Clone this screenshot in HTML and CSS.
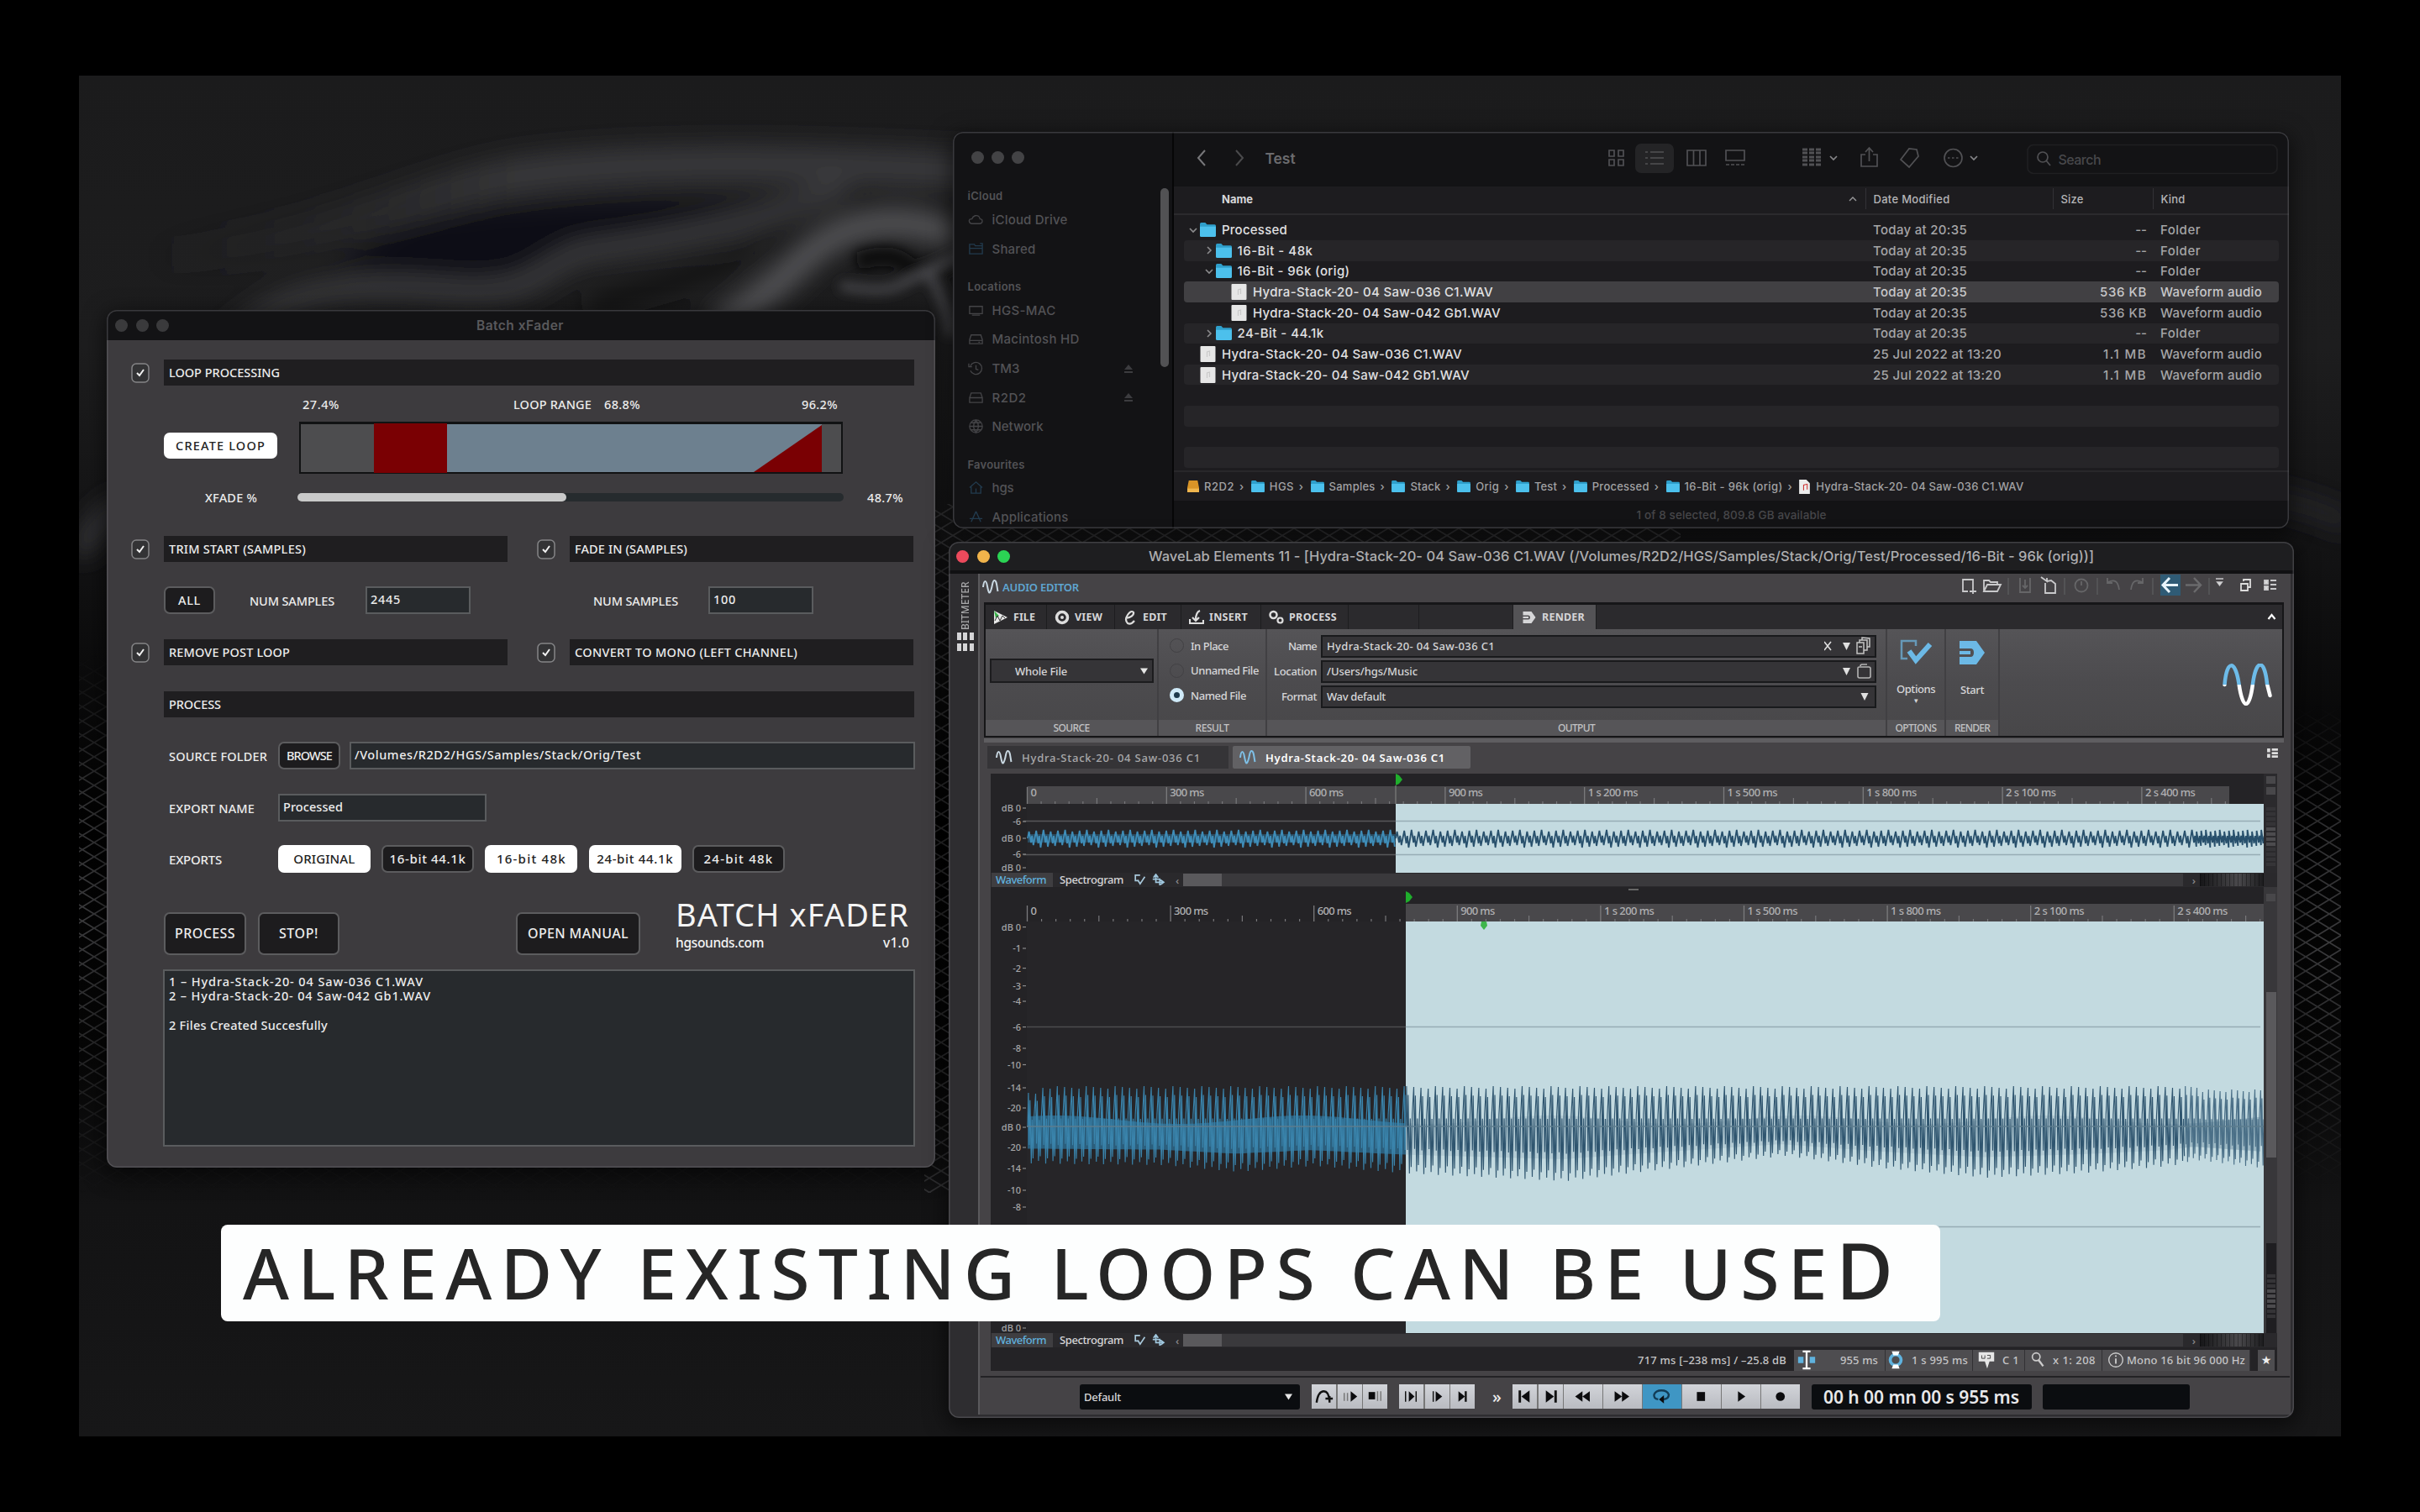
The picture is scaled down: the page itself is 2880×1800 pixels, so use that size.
FILE: index.html
```html
<!DOCTYPE html>
<html lang="en">
<head>
<meta charset="utf-8">
<title>Batch xFader</title>
<link rel="stylesheet" href="styles.css">
</head>
<body>
<svg class="defs" aria-hidden="true">
  <symbol id="folder" viewBox="0 0 18 16"><path d="M0 1.500Q0 0 1.500 0H6l2 2h8.500Q18 2 18 3.500V14.500Q18 16 16.500 16H1.500Q0 16 0 14.500Z" fill="#2f9fcb"/><path d="M0 4.500H18V14.500Q18 16 16.500 16H1.500Q0 16 0 14.500Z" fill="#4cc0ec"/></symbol>
  <symbol id="doc" viewBox="0 0 18 19"><rect width="18" height="19" rx="1" fill="#e6e6e6"/><path d="M8 13V7l3-1v6" fill="none" stroke="#cacaca" stroke-width="1.200"/></symbol>
  <symbol id="down" viewBox="0 0 10 8"><path d="M1 2l4 4 4-4" fill="none" stroke="currentColor" stroke-width="1.600"/></symbol>
  <symbol id="right" viewBox="0 0 8 10"><path d="M2 1l4 4-4 4" fill="none" stroke="currentColor" stroke-width="1.600"/></symbol>
  <symbol id="eject" viewBox="0 0 12 12"><path d="M6 1l5 6H1z M1 9h10v2H1z" fill="currentColor"/></symbol>
  <symbol id="wave" viewBox="0 0 20 18"><path d="M1 9C2 0 4.500 0 6 8S8.500 18 10.500 12 12 1 14.500 1 17 6 18.500 14" fill="none" stroke="currentColor" stroke-width="2"/></symbol>
  <symbol id="tri" viewBox="0 0 10 8"><path d="M0 0h10L5 8z" fill="currentColor"/></symbol>
  <symbol id="tick" viewBox="0 0 22 24"><rect x="1" y="1" width="20" height="22" rx="5" fill="#333335" stroke="#858587" stroke-width="1.500"/><path d="M7 12l3 3 5-7" fill="none" stroke="#f2f2f2" stroke-width="2"/></symbol>
  <symbol id="renderico" viewBox="0 0 32 30"><path d="M1 1h20l10 14-10 14H1V20H14Q18 20 18 15T14 10H1Z" fill="currentColor"/><path d="M1 15h13" stroke="currentColor" stroke-width="4"/></symbol>
  <symbol id="minis" viewBox="0 0 40 16"><path d="M7 2H1v7h3M4 8l3 5 6-9" fill="none" stroke="#a9c9dc" stroke-width="1.800"/><path d="M27 2v9h9M24 5l3-4 3 4M23 7h9v8M33 8l4 3-4 3" fill="none" stroke="#9fc6dd" stroke-width="1.800"/></symbol>
</svg>

<main class="desktop">
  <svg class="wallpaper" viewBox="94 90 2692 1620" preserveAspectRatio="none">
    <defs>
      <filter id="soft" x="-20%" y="-30%" width="140%" height="160%"><feGaussianBlur stdDeviation="15"/></filter>
      <filter id="soft2" x="-20%" y="-20%" width="140%" height="140%"><feGaussianBlur stdDeviation="7"/></filter>
      <linearGradient id="sky" x1="0" y1="0" x2="0" y2="1"><stop offset="0" stop-color="#1b1b1c"/><stop offset=".2" stop-color="#1d1d1e"/><stop offset=".36" stop-color="#121213"/><stop offset=".55" stop-color="#020202"/><stop offset=".72" stop-color="#060606"/><stop offset=".83" stop-color="#131314"/><stop offset="1" stop-color="#171718"/></linearGradient>
      <linearGradient id="ridge" gradientUnits="userSpaceOnUse" x1="170" y1="0" x2="620" y2="0"><stop offset="0" stop-color="#2a2a2c" stop-opacity="0"/><stop offset="1" stop-color="#38383a"/></linearGradient>
      <linearGradient id="fade" x1="0" y1="0" x2="0" y2="1"><stop offset="0" stop-color="#000"/><stop offset=".25" stop-color="#ccc"/><stop offset=".5" stop-color="#fff"/><stop offset=".75" stop-color="#999"/><stop offset="1" stop-color="#000"/></linearGradient>
      <mask id="meshMask" maskUnits="userSpaceOnUse" x="94" y="600" width="2692" height="900"><rect x="94" y="780" width="1000" height="640" fill="url(#fade)"/><rect x="1100" y="600" width="900" height="820" fill="#ccc"/><rect x="2700" y="840" width="90" height="570" fill="url(#fade)"/></mask>
      <pattern id="mesh" width="28" height="17" patternUnits="userSpaceOnUse"><path d="M0 0L28 17M28 0L0 17" stroke="#3a3a3c" stroke-width="1.700" fill="none"/></pattern>
    </defs>
    <rect x="94" y="90" width="2692" height="1620" fill="url(#sky)"/>
    <g filter="url(#soft)" fill="none">
      <path d="M150 310C400 290 500 225 621 209S900 190 1180 205" stroke="url(#ridge)" stroke-width="46"/>
      <path d="M400 320C470 240 640 235 930 238 900 270 800 270 690 300 620 350 500 330 400 320Z" fill="#111112"/>
      <path d="M260 420C330 340 411 335 551 347 640 350 640 320 691 301 770 290 902 270 1007 221" stroke="#3a3a3c" stroke-width="26"/>
      <path d="M700 365C760 345 850 330 900 290" stroke="#121213" stroke-width="26"/>
      <path d="M850 390C920 350 950 310 972 295S1042 245 1140 280" stroke="#5a5a5d" stroke-width="30"/>
      <path d="M94 660Q120 610 150 600" stroke="#38383a" stroke-width="26"/>
      <path d="M2690 590Q2750 600 2800 625" stroke="#28282a" stroke-width="24"/>
    </g>
    <g filter="url(#soft2)" fill="none"><path d="M1020 312q40-15 60 4t90-18" stroke="#0a0a0b" stroke-width="22"/><path d="M1000 340q50 10 70 0t80-40M1100 320q30 40 30 80" stroke="#4a4a4d" stroke-width="10"/></g>
    <g mask="url(#meshMask)"><rect x="94" y="600" width="2692" height="900" fill="url(#mesh)"/></g>
  </svg>

  <!-- Batch xFader -->
  <section class="window batch">
    <header class="batch-title"><span class="lights dim"><i></i><i></i><i></i></span><span class="t" data-w="104">Batch xFader</span></header>
    <div class="line l1"><svg class="chk"><use href="#tick"/></svg><div class="bar wide"><span data-w="132">LOOP PROCESSING</span></div></div>
    <div class="line l2"><span data-w="44">27.4%</span><span data-w="93">LOOP RANGE</span><span data-w="43">68.8%</span><span data-w="43">96.2%</span></div>
    <div class="line l3"><button class="btn on create"><span data-w="107">CREATE LOOP</span></button>
      <svg class="range" viewBox="0 0 647 62"><rect width="647" height="62" fill="#111213"/><rect x="2" y="3" width="643" height="57" fill="#4d4d4f"/><rect x="89" y="2" width="87" height="59" fill="#7a0003"/><rect x="176" y="3" width="446" height="57" fill="#6d808f"/><path d="M541 60L622 4V60Z" fill="#7a0003"/></svg></div>
    <div class="line l4"><span data-w="62">XFADE %</span><div class="slider"><div class="fill"></div></div><span data-w="43">48.7%</span></div>
    <div class="line l5"><svg class="chk"><use href="#tick"/></svg><div class="bar half"><span data-w="163">TRIM START (SAMPLES)</span></div><svg class="chk c2"><use href="#tick"/></svg><div class="bar half"><span data-w="134">FADE IN (SAMPLES)</span></div></div>
    <div class="line l6"><button class="btn all"><span data-w="27">ALL</span></button><span class="ns1" data-w="101">NUM SAMPLES</span><div class="input"><span data-w="36">2445</span></div><span class="ns2" data-w="101">NUM SAMPLES</span><div class="input"><span data-w="27">100</span></div></div>
    <div class="line l7"><svg class="chk"><use href="#tick"/></svg><div class="bar half"><span data-w="144">REMOVE POST LOOP</span></div><svg class="chk c2"><use href="#tick"/></svg><div class="bar half"><span data-w="265">CONVERT TO MONO (LEFT CHANNEL)</span></div></div>
    <div class="line l8"><div class="bar wide"><span data-w="62">PROCESS</span></div></div>
    <div class="line l9"><span class="lab" data-w="117">SOURCE FOLDER</span><button class="btn"><span data-w="54">BROWSE</span></button><div class="input"><span data-w="341">/Volumes/R2D2/HGS/Samples/Stack/Orig/Test</span></div></div>
    <div class="line l10"><span class="lab" data-w="102">EXPORT NAME</span><div class="input"><span data-w="71">Processed</span></div></div>
    <div class="line l11"><span class="lab" data-w="63">EXPORTS</span><button class="btn on"><span data-w="73">ORIGINAL</span></button><button class="btn"><span data-w="91">16-bit 44.1k</span></button><button class="btn on"><span data-w="83">16-bit 48k</span></button><button class="btn on"><span data-w="91">24-bit 44.1k</span></button><button class="btn"><span data-w="83">24-bit 48k</span></button></div>
    <div class="line l12"><button class="btn p"><span data-w="72">PROCESS</span></button><button class="btn s"><span data-w="47">STOP!</span></button><button class="btn m"><span data-w="120">OPEN MANUAL</span></button>
      <div class="brand"><div class="name"><span data-w="278">BATCH xFADER</span></div><div class="sub"><span data-w="105">hgsounds.com</span><span data-w="31">v1.0</span></div></div></div>
    <div class="log"><p><span data-w="303">1 – Hydra-Stack-20- 04 Saw-036 C1.WAV</span></p><p><span data-w="312">2 – Hydra-Stack-20- 04 Saw-042 Gb1.WAV</span></p><p>&nbsp;</p><p><span data-w="189">2 Files Created Succesfully</span></p></div>
  </section>

  <!-- Finder -->
  <section class="window finder">
    <aside class="side">
      <span class="lights dim"><i></i><i></i><i></i></span>
      <h4><span data-w="42">iCloud</span></h4>
      <p><svg viewBox="0 0 20 20"><path d="M5 15H15Q19 14 17.500 10 16 9 15 9 14 4 9 5 6 6 5 9 1 9 1.500 12 2 15 5 15Z"/></svg><span data-w="90">iCloud Drive</span></p>
      <p class="bl"><svg viewBox="0 0 20 20"><path d="M2 4H8l1 2h9V16H2ZM2 9H18M15 3h3v3"/></svg><span data-w="52">Shared</span></p>
      <h4 class="g2"><span data-w="64">Locations</span></h4>
      <p><svg viewBox="0 0 20 20"><path d="M2 5H18V14H2ZM5 16h10"/></svg><span data-w="76">HGS-MAC</span></p>
      <p><svg viewBox="0 0 20 20"><path d="M4 5H16L18 11V16H2V11ZM2 12H18M13 14h2"/></svg><span data-w="104">Macintosh HD</span></p>
      <p><svg viewBox="0 0 20 20"><path d="M3 7A7.500 7.500 0 1 1 3 13M1 4v4h4M10 6v5l3 1"/></svg><span data-w="33">TM3</span><svg class="ej"><use href="#eject"/></svg></p>
      <p><svg viewBox="0 0 20 20"><path d="M4 4H16L18 10V16H2V10ZM2 10H18"/></svg><span data-w="41">R2D2</span><svg class="ej"><use href="#eject"/></svg></p>
      <p><svg viewBox="0 0 20 20"><circle cx="10" cy="10" r="8"/><path d="M2 10H18M10 2Q4 10 10 18M10 2Q16 10 10 18M4 5.500H16M4 14.500H16"/></svg><span data-w="61">Network</span></p>
      <h4 class="g3"><span data-w="68">Favourites</span></h4>
      <p class="bl"><svg viewBox="0 0 20 20"><path d="M2 10L10 3l8 7M4 9v8H16V9M10 17v-6"/></svg><span data-w="26">hgs</span></p>
      <p class="bl"><svg viewBox="0 0 20 20"><path d="M10 3L4 16M10 3l6 13M2 12H18"/></svg><span data-w="91">Applications</span></p>
      <div class="thumb"></div>
    </aside>
    <div class="files">
      <div class="ftool">
        <svg class="nav" viewBox="1397 157 100 65"><path d="M1434 179l-8 9 8 9" stroke="#77777a"/><path d="M1471 179l8 9-8 9" stroke="#4a4a4c"/></svg>
        <span class="title" data-w="36">Test</span>
        <svg class="ficons" viewBox="1900 157 824 65">
          <rect x="1946" y="171" width="46" height="35" rx="7" fill="#242426" stroke="none"/>
          <path d="M1915 179h6v7h-6zM1926 179h6v7h-6zM1915 190h6v7h-6zM1926 190h6v7h-6z"/>
          <path d="M1964 181h16M1964 188h16M1964 195h16M1958 181h3M1958 188h3M1958 195h3"/>
          <path d="M2008 179h22v18h-22zM2015.500 179v18M2023 179v18"/>
          <path d="M2054 179h22v12h-22zM2054 196h4M2060 196h4M2066 196h4M2072 196h4"/>
          <path d="M2145 178h22M2145 182h22M2145 187h22M2145 191h22M2145 196h22" stroke-width="3" stroke-dasharray="6 2"/>
          <path d="M2178 186l4 4 4-4M2345 186l4 4 4-4" stroke="#858588"/>
          <path d="M2220 184h-5v14h19v-14h-5M2224.500 192v-15M2220 181l4.500-5 4.500 5"/>
          <path d="M2262 190l10-13 9 1 2 8-11 13z"/>
          <circle cx="2324.500" cy="188" r="10.500"/><path d="M2318 188h13" stroke-dasharray="2.500 2.500"/>
          <rect x="2413" y="172.500" width="297" height="34" rx="7" stroke="#1f1f21"/>
          <circle cx="2431" cy="187" r="6"/><path d="M2435 191l5 6"/>
          <text x="2449.500" y="196" textLength="51">Search</text>
        </svg>
      </div>
      <div class="fhead"><b data-w="37">Name</b><svg class="up" viewBox="0 0 10 8"><path d="M1 6l4-4 4 4"/></svg><span class="c1"><span data-w="91">Date Modified</span></span><span class="c2"><span data-w="27">Size</span></span><span class="c3"><span data-w="29">Kind</span></span></div>
      <div class="rows">
        <div class="r"><svg class="ch"><use href="#down"/></svg><svg class="fo"><use href="#folder"/></svg><span class="n"><span data-w="78">Processed</span></span><span class="d"><span data-w="112">Today at 20:35</span></span><span class="s">--</span><span class="k"><span data-w="48">Folder</span></span></div>
        <div class="r v2"><svg class="ch"><use href="#right"/></svg><svg class="fo"><use href="#folder"/></svg><span class="n"><span data-w="90">16-Bit - 48k</span></span><span class="d"><span data-w="112">Today at 20:35</span></span><span class="s">--</span><span class="k"><span data-w="48">Folder</span></span></div>
        <div class="r v2"><svg class="ch"><use href="#down"/></svg><svg class="fo"><use href="#folder"/></svg><span class="n"><span data-w="134">16-Bit - 96k (orig)</span></span><span class="d"><span data-w="112">Today at 20:35</span></span><span class="s">--</span><span class="k"><span data-w="48">Folder</span></span></div>
        <div class="r v3 sel"><svg class="ch"></svg><svg class="fi"><use href="#doc"/></svg><span class="n"><span data-w="286">Hydra-Stack-20- 04 Saw-036 C1.WAV</span></span><span class="d"><span data-w="112">Today at 20:35</span></span><span class="s"><span data-w="56">536 KB</span></span><span class="k"><span data-w="121">Waveform audio</span></span></div>
        <div class="r v3"><svg class="ch"></svg><svg class="fi"><use href="#doc"/></svg><span class="n"><span data-w="295">Hydra-Stack-20- 04 Saw-042 Gb1.WAV</span></span><span class="d"><span data-w="112">Today at 20:35</span></span><span class="s"><span data-w="56">536 KB</span></span><span class="k"><span data-w="121">Waveform audio</span></span></div>
        <div class="r v2"><svg class="ch"><use href="#right"/></svg><svg class="fo"><use href="#folder"/></svg><span class="n"><span data-w="103">24-Bit - 44.1k</span></span><span class="d"><span data-w="112">Today at 20:35</span></span><span class="s">--</span><span class="k"><span data-w="48">Folder</span></span></div>
        <div class="r"><svg class="ch"></svg><svg class="fi"><use href="#doc"/></svg><span class="n"><span data-w="286">Hydra-Stack-20- 04 Saw-036 C1.WAV</span></span><span class="d"><span data-w="153">25 Jul 2022 at 13:20</span></span><span class="s"><span data-w="52">1.1 MB</span></span><span class="k"><span data-w="121">Waveform audio</span></span></div>
        <div class="r"><svg class="ch"></svg><svg class="fi"><use href="#doc"/></svg><span class="n"><span data-w="295">Hydra-Stack-20- 04 Saw-042 Gb1.WAV</span></span><span class="d"><span data-w="153">25 Jul 2022 at 13:20</span></span><span class="s"><span data-w="52">1.1 MB</span></span><span class="k"><span data-w="121">Waveform audio</span></span></div>
        <div class="r"></div><div class="r"></div><div class="r"></div><div class="r"></div>
      </div>
      <div class="path">
        <svg class="disk" viewBox="0 0 16 16"><path d="M2 0H14L16 10V16H0V10Z" fill="#d99427"/><path d="M0 11H16V16H0Z" fill="#f0b64e"/></svg><span data-w="36">R2D2</span><em>›</em>
        <svg><use href="#folder"/></svg><span data-w="29">HGS</span><em>›</em>
        <svg><use href="#folder"/></svg><span data-w="55">Samples</span><em>›</em>
        <svg><use href="#folder"/></svg><span data-w="36">Stack</span><em>›</em>
        <svg><use href="#folder"/></svg><span data-w="28">Orig</span><em>›</em>
        <svg><use href="#folder"/></svg><span data-w="27">Test</span><em>›</em>
        <svg><use href="#folder"/></svg><span data-w="68">Processed</span><em>›</em>
        <svg><use href="#folder"/></svg><span data-w="117">16-Bit - 96k (orig)</span><em>›</em>
        <svg class="pf" viewBox="0 0 12 16"><path d="M0 0H8l4 4V16H0Z" fill="#ececec"/><path d="M5 12V6l4-1v6" stroke="#c33" fill="none"/></svg><span data-w="247">Hydra-Stack-20- 04 Saw-036 C1.WAV</span>
      </div>
      <div class="fstat"><span data-w="226">1 of 8 selected, 809.8 GB available</span></div>
    </div>
  </section>

  <!-- WaveLab -->
  <section class="window lab-win">
    <header class="wl-title"><span class="lights"><i></i><i></i><i></i></span><span class="t" data-w="1125">WaveLab Elements 11 - [Hydra-Stack-20- 04 Saw-036 C1.WAV (/Volumes/R2D2/HGS/Samples/Stack/Orig/Test/Processed/16-Bit - 96k (orig))]</span></header>
    <div class="wl-body">
      <aside class="rail"><span>BITMETER</span><div class="cells"><i></i><i></i><i></i><i></i><i></i><i></i></div></aside>
      <div class="wl-main">
        <div class="wl-head"><svg class="wv"><use href="#wave"/></svg><span data-w="91">AUDIO EDITOR</span>
          <svg class="htools" viewBox="2330 684 396 33">
            <path d="M2390 690v20M2457 690v20M2496 690v20M2562 690v20M2629 690v20" stroke="#59595b" stroke-width="1.500"/>
            <path d="M2342 706h-6v-14h12v9M2348 701v8M2344 706h8"/>
            <path d="M2361 706v-13h6l2 2h8v4M2361 706l4-8h16l-4 8z"/>
            <path d="M2404 690v17h12v-17M2410 692v10M2407 699l3 3 3-3" stroke="#666668"/>
            <path d="M2434 696v12h12v-11l-5-4-5 1M2429 689l7 5v-4"/>
            <circle cx="2477" cy="699" r="7.500" stroke="#666668"/><path d="M2477 694v5" stroke="#666668"/>
            <path d="M2509 695q11-6 13 9M2508 690v6h6M2549 695q-11-6-13 9M2550 690v6h-6" stroke="#666668"/>
            <rect x="2571" y="686" width="24" height="25" fill="#2f5b75" stroke="none"/><path d="M2592 698.500h-17M2582 690l-8 8.500 8 8.500" stroke="#e8f4fb" stroke-width="3"/>
            <path d="M2601 698.500h17M2611 690l8 8.500-8 8.500" stroke="#6a6a6c" stroke-width="2.500"/>
            <path d="M2637 691h9M2638.500 695h6l-3 4z" fill="#ddd" stroke-width="1.300"/>
            <path d="M2667 697h8v8h-8zM2670 694v-2h8v9h-3" stroke="#ddd"/><path d="M2695 693h4v4h-4zM2695 700h4v4h-4zM2702 693h7M2702 698h7M2702 703h7" fill="#ddd"/>
          </svg></div>
        <div class="ribbon">
          <nav class="tabs">
            <a><svg viewBox="0 0 18 18"><path d="M1 1L17 9 1 17z" fill="#e8e8e8"/><path d="M1 1l6 6-4 3z" fill="#39b54a"/><path d="M2 13l3-6 3 6 3-6 3 3" stroke="#333" fill="none"/></svg><span data-w="26">FILE</span></a>
            <a><svg viewBox="0 0 18 18"><circle cx="9" cy="9" r="6.500" stroke="#ddd" stroke-width="3.500" fill="none"/><circle cx="9" cy="9" r="2" fill="#ddd"/></svg><span data-w="33">VIEW</span></a>
            <a><svg viewBox="0 0 18 18"><path d="M4 10Q14 8 13 3 10 0 6 6T6 16Q10 18 14 13" stroke="#ddd" stroke-width="2.200" fill="none"/></svg><span data-w="29">EDIT</span></a>
            <a><svg viewBox="0 0 18 18"><path d="M1 11v5h16v-4M13 1Q8 3 8 12M4 9l4 4 4-4" stroke="#ddd" stroke-width="2.200" fill="none"/></svg><span data-w="46">INSERT</span></a>
            <a><svg viewBox="0 0 18 18"><circle cx="5.500" cy="6" r="4" stroke="#ddd" stroke-width="2.500" fill="none"/><circle cx="13.500" cy="12.500" r="3" stroke="#ddd" stroke-width="2.200" fill="none"/></svg><span data-w="57">PROCESS</span></a>
            <a></a><a></a>
            <a class="act"><svg viewBox="0 0 32 30"><use href="#renderico"/></svg><span data-w="51">RENDER</span></a>
            <svg class="collapse" viewBox="0 0 10 8"><path d="M1 7l4-5 4 5" stroke="#fff" stroke-width="2.200" fill="none"/></svg>
          </nav>
          <div class="rbody">
            <div class="grp g-src"><div class="in"><div class="dd"><span data-w="62">Whole File</span><svg class="tri"><use href="#tri"/></svg></div></div><footer><span data-w="43">SOURCE</span></footer></div>
            <div class="grp g-res"><div class="in"><label><i></i><span data-w="45">In Place</span></label><label><i></i><span data-w="81">Unnamed File</span></label><label><i class="on"></i><span data-w="66">Named File</span></label></div><footer><span data-w="40">RESULT</span></footer></div>
            <div class="grp g-out"><div class="in">
              <div class="f"><span class="fl"><span data-w="34">Name</span></span><div class="box"><span data-w="200">Hydra-Stack-20- 04 Saw-036 C1</span><svg class="fx" viewBox="0 0 60 24"><path d="M0 7l8 10M8 7L0 17" stroke="#e0e0e0" stroke-width="1.600"/><path d="M22 8h9l-4.500 9z" fill="#e0e0e0"/><path d="M39 8h8v13h-8zM42 8V5h9v12h-4M45 5V2l9 1v10h-3M41 13h4" stroke="#c4c4c4" stroke-width="1.500" fill="none"/></svg></div></div>
              <div class="f"><span class="fl"><span data-w="51">Location</span></span><div class="box"><span data-w="108">/Users/hgs/Music</span><svg class="fx" viewBox="0 0 60 24"><path d="M22 8h9l-4.500 9z" fill="#e0e0e0"/><path d="M40 8q0-1 2-1h11q2 0 2 2v9q0 2-2 2H42q-2 0-2-2zM43 6q0-2 2-2h6" stroke="#b4b4b4" stroke-width="1.600" fill="none"/></svg></div></div>
              <div class="f"><span class="fl"><span data-w="42">Format</span></span><div class="box"><span data-w="70">Wav default</span><svg class="fx" viewBox="0 0 60 24"><path d="M43.500 8h9l-4.500 9z" fill="#e0e0e0"/></svg></div></div>
            </div><footer><span data-w="44">OUTPUT</span></footer></div>
            <div class="grp g-opt"><div class="in"><svg viewBox="0 0 40 30"><path d="M10 23H3V2H20V8" fill="none" stroke="#6699b8" stroke-width="2.500"/><path d="M12 14l8 11L37 6" fill="none" stroke="#6cb9e6" stroke-width="6"/></svg><span data-w="46">Options</span><small>▾</small></div><footer><span data-w="49">OPTIONS</span></footer></div>
            <div class="grp g-ren"><div class="in"><svg viewBox="0 0 32 30"><use href="#renderico"/></svg><span data-w="28">Start</span></div><footer><span data-w="42">RENDER</span></footer></div>
            <svg class="logo" viewBox="0 0 60 50"><defs><linearGradient id="lg" x1="0" y1="0" x2="0" y2="1"><stop offset=".5" stop-color="#6dbbe8"/><stop offset=".52" stop-color="#fff"/></linearGradient></defs><path d="M2.500 25C5 -5 15 -5 19.500 24 24 56 32 56 36 24 40 -6 50 -6 53 24L56.500 38" fill="none" stroke="url(#lg)" stroke-width="4.500" stroke-linecap="round"/></svg>
          </div>
        </div>
        <div class="ftabs"><a><svg class="wv"><use href="#wave"/></svg><span data-w="213">Hydra-Stack-20- 04 Saw-036 C1</span></a><a class="act"><svg class="wv"><use href="#wave"/></svg><span data-w="214">Hydra-Stack-20- 04 Saw-036 C1</span></a><svg class="menu" viewBox="0 0 14 12"><path d="M0 0h4v5H0zM0 7h4v5H0zM6 0h8v3H6zM6 4.500h8v3H6zM6 9h8v3H6z" fill="#ddd"/></svg></div>
        <div class="editor">
          <svg class="pane" id="overview" viewBox="1179 922 1531 118"></svg>
          <div class="vt"><a class="act"><span data-w="60">Waveform</span></a><a><span data-w="76">Spectrogram</span></a><svg class="mini"><use href="#minis"/></svg><em>‹</em><div class="sb"><i></i></div><em>›</em><div class="wheel"></div></div>
          <svg class="pane" id="detail" viewBox="1179 1057 1531 531"></svg>
          <div class="vt"><a class="act"><span data-w="60">Waveform</span></a><a><span data-w="76">Spectrogram</span></a><svg class="mini"><use href="#minis"/></svg><em>‹</em><div class="sb"><i></i></div><em>›</em><div class="wheel"></div></div>
          <div class="stat"><span data-w="177">717 ms [–238 ms] / –25.8 dB</span>
            <div class="cells2">
              <div class="s1"><svg viewBox="0 0 22 26"><path d="M0 9h7v8H0zM15 9h7v8h-7z" fill="#5fb2de"/><path d="M6 2h10M11 2v22M6 24h10" stroke="#fff" stroke-width="2.500"/></svg><span data-w="45">955 ms</span></div>
              <div class="s2"><svg viewBox="0 0 22 26"><circle cx="11" cy="13" r="7" fill="none" stroke="#5fb2de" stroke-width="4"/><path d="M6 2h10l-2 5H8zM8 19h6l2 5H6z" fill="#fff"/></svg><span data-w="67">1 s 995 ms</span></div>
              <div class="s3"><svg viewBox="0 0 22 26"><path d="M1 3h20v12h-6l-3 9-3-9H1z" fill="#e6e6e6"/><path d="M5 7v4h4V7M12 7h4v4h-4" stroke="#444" fill="none"/></svg><span data-w="20">C 1</span></div>
              <div class="s4"><svg viewBox="0 0 22 26"><circle cx="8" cy="9" r="5" fill="none" stroke="#ccc" stroke-width="1.800"/><path d="M11 13l6 8" stroke="#ccc" stroke-width="2.600"/></svg><span data-w="51">x 1: 208</span></div>
              <div class="s5"><svg viewBox="0 0 22 26"><circle cx="11" cy="13" r="9" fill="none" stroke="#ccc" stroke-width="1.500"/><path d="M11 11v7M11 7v2" stroke="#ccc" stroke-width="2"/></svg><span data-w="141">Mono 16 bit 96 000 Hz</span></div>
            </div><div class="star">★</div></div>
        </div>
        <div class="transport">
          <div class="preset"><span data-w="44">Default</span><svg class="tri"><use href="#tri"/></svg></div>
          <div class="tb a"><b><svg viewBox="0 0 30 29"><path d="M6 22Q8 8 15 8 21 8 22 20M17 17h9M22 22v-8"/></svg></b><b><svg viewBox="0 0 30 29"><path d="M8 10v10M12 10v10" stroke-width="1.500" stroke="#777"/><path class="k" d="M16 8l8 6.500-8 6.500z"/></svg></b><b><svg viewBox="0 0 30 29"><path class="k" d="M7 9h8v9H7z"/><path d="M18 8v12M22 8v12" stroke-width="1.500" stroke="#777"/></svg></b></div>
          <div class="tb b"><b><svg viewBox="0 0 30 29"><path class="k" d="M12 8l7 6.500-7 6.500z"/><path d="M8 8v13M21 8v13" stroke-width="1.500"/></svg></b><b><svg viewBox="0 0 30 29"><path class="k" d="M13 8l8 6.500-8 6.500z"/><path d="M10 8v13" stroke-width="1.500"/></svg></b><b><svg viewBox="0 0 30 29"><path class="k" d="M10 8l8 6.500-8 6.500z"/><path d="M19 8v13"/></svg></b></div>
          <em class="more">»</em>
          <div class="tb c"><b><svg viewBox="0 0 30 29"><path class="k" d="M21 7v15l-10-7.500z"/><path d="M9 7v15" stroke-width="3"/></svg></b><b><svg viewBox="0 0 30 29"><path class="k" d="M9 7v15l10-7.500z"/><path d="M21 7v15" stroke-width="3"/></svg></b><b><svg viewBox="0 0 47 29"><path class="k" d="M23 8v13l-9-6.500zM32 8v13l-9-6.500z"/></svg></b><b><svg viewBox="0 0 47 29"><path class="k" d="M14 8v13l9-6.500zM23 8v13l9-6.500z"/></svg></b><b class="loop"><svg viewBox="0 0 47 29"><path d="M19 18Q13 17 14 12 16 7 23 7T32 12Q32 18 25 18" stroke="#123c56"/><path class="k" d="M26 13v10l-6-5z"/></svg></b><b><svg viewBox="0 0 47 29"><path class="k" d="M18 9h10v11H18z"/></svg></b><b><svg viewBox="0 0 47 29"><path class="k" d="M20 8l9 6.500-9 6.500z"/></svg></b><b><svg viewBox="0 0 47 29"><circle class="k" cx="23.500" cy="14.500" r="5.500"/></svg></b></div>
          <div class="time"><span data-w="233">00 h 00 mn 00 s 955 ms</span></div><div class="time2"></div>
        </div>
      </div>
    </div>
  </section>

  <div class="caption"><span data-w="1896">ALREADY EXISTING LOOPS CAN BE USE</span><span class="pop">D</span></div>
</main>
<script src="app.js"></script>
</body>
</html>
```
FILE: styles.css
```css
* { box-sizing: border-box; margin: 0; padding: 0; }
body { width: 2880px; height: 1800px; background: #000; overflow: hidden; font-family: "Noto Sans", sans-serif; }
.defs { position: absolute; width: 0; height: 0; }
button { border: 0; font: inherit; color: inherit; }
i, em { font-style: normal; }
span, b { white-space: pre; }
svg { display: block; flex: none; }
.desktop { position: relative; width: 2880px; height: 1800px; }
.wallpaper { position: absolute; left: 94px; top: 90px; width: 2692px; height: 1620px; }
.window { position: absolute; overflow: hidden; border-radius: 12px; box-shadow: 0 6px 24px 4px rgba(0,0,0,.5); }
.window::after { content: ""; position: absolute; inset: 0; border-radius: 12px; box-shadow: inset 0 0 0 1.5px rgba(120,120,125,.38); pointer-events: none; }
.lights { display: flex; gap: 9.500px; }
.lights i { width: 15px; height: 15px; border-radius: 50%; background: #2bd454; }
.lights i:first-child { background: #ec4a5c; }
.lights i:nth-child(2) { background: #f2b44b; }
.lights.dim i { background: #3a3a3c !important; }

/* Batch xFader */
.batch { left: 127px; top: 369px; width: 986px; height: 1021px; background: #3d3b3e; color: #ececec; font-size: 14.500px; font-weight: 500; }
.batch-title { height: 36px; background: #131315; display: flex; align-items: center; position: relative; padding-left: 10px; }
.batch-title .t { margin-left: 366px; font: 600 15.500px Inter, sans-serif; color: #59595c; }
.batch-title .t { margin-left: 366px; }
.line { display: flex; align-items: center; height: 31px; padding-left: 68px; }
.chk { width: 22px; height: 24px; margin-left: -39px; margin-right: 17px; }
.chk.c2 { margin-left: 35px; margin-right: 17px; }
.bar { height: 31px; background: #1f1e20; padding: 0 0 2px 6px; display: flex; align-items: center; }
.bar.wide { width: 893px; }
.bar.half { width: 409px; }
.l1 { margin-top: 23px; }
.l2 { margin-top: 6px; padding-left: 233px; }
.l2 span:nth-child(2) { margin-left: 207px; }
.l2 span:nth-child(3) { margin-left: 15px; }
.l2 span:nth-child(4) { margin-left: 192px; }
.l3 { height: 62px; margin-top: 6px; }
.btn { height: 33px; border-radius: 7px; background: #1d1c1e; border: 2px solid #5c5c5e; display: flex; align-items: center; justify-content: center; padding-bottom: 2px; }
.btn.on { background: #fff; border-color: #fff; color: #222; }
.create { width: 135px; height: 31px; margin-right: 26px; margin-bottom: 5px; }
.range { width: 647px; height: 62px; }
.l4 { padding-left: 117px; margin-top: 12px; }
.slider { width: 650px; height: 10px; margin: 0 28px 0 48px; background: #262b2e; border-radius: 5px; }
.fill { width: 49.200%; height: 10px; border-radius: 5px; background: #c9c9c9; }
.l5 { margin-top: 31px; }
.l6 { height: 33px; margin-top: 29px; }
.all { width: 61px; }
.input { height: 33px; border: 2px solid #5a5c5e; background: #272a2d; display: flex; align-items: center; padding: 0 0 3px 4px; }
.l6 .input { width: 125px; }
.ns1 { margin-left: 41px; margin-right: 37px; }
.ns2 { margin-left: 146px; margin-right: 36px; }
.l7 { margin-top: 30px; }
.l8 { margin-top: 31px; }
.l9, .l10, .l11 { height: 33px; padding-left: 74px; }
.l9 { margin-top: 29px; }
.l9 .btn { width: 74px; margin: 0 11px 0 13px; }
.l9 .input { width: 673px; }
.l10 { margin-top: 29px; }
.l10 .input { width: 248px; margin-left: 28px; }
.l11 { margin-top: 28px; gap: 13.300px; font-size: 15px; }
.l11 .btn { width: 110px; }
.l11 .btn:nth-child(2) { margin-left: 53.500px; }
.l12 { height: 68px; margin-top: 30px; align-items: flex-end; }
.l12 .btn { height: 51px; font-size: 16px; }
.p { width: 98px; }
.s { width: 97px; margin-left: 14px; }
.m { width: 148px; margin-left: 210px; }
.brand { width: 278px; margin-left: 42px; height: 71px; color: #f4f4f4; }
.name { font-size: 38px; line-height: 44px; font-weight: 400; }
.sub { display: flex; justify-content: space-between; font-size: 15.500px; line-height: 20px; margin-top: 2px; }
.log { margin: 17px 0 0 67px; width: 895px; height: 211px; border: 2px solid #5a5c5e; background: #272a2d; padding: 4px 0 0 5px; font-size: 14.500px; line-height: 17.400px; }

/* Finder */
.finder { left: 1134px; top: 157px; width: 1590px; height: 472px; background: #1d1c1f; font: 500 15px Inter, sans-serif; display: flex; color: #b5b5b7; }
.side { width: 263px; background: #131315; color: #525255; border-right: 2px solid #060607; position: relative; padding-left: 17.500px; flex: none; }
.side .lights { margin: 23px 0 0 4px; gap: 9px; }
.side .lights i { background: #434345 !important; }
.side h4 { font-size: 13px; font-weight: 600; height: 20px; line-height: 20px; margin-top: 27.500px; margin-bottom: 1.500px; }
.side h4.g2 { margin-top: 18px; }
.side h4.g3 { margin-top: 17.500px; }
.side p { height: 34.700px; display: flex; align-items: center; }
.side p svg { width: 19px; height: 19px; margin-right: 10px; fill: none; stroke: #444447; stroke-width: 1.400; }
.side h4.g2 + p, .side h4.g3 + p { margin-top: -1px; }
.side p.bl svg { stroke: #223b4e; }
.side p svg.ej { position: absolute; left: 203px; width: 12px; height: 12px; margin: 0; stroke: none; color: #3c3c3f; }
.thumb { position: absolute; left: 247px; top: 67px; width: 10px; height: 213px; border-radius: 5px; background: #525254; }
.files { flex: 1; display: flex; flex-direction: column; }
.ftool { height: 65px; background: #131315; display: flex; align-items: center; }
.nav { width: 100px; height: 65px; fill: none; stroke-width: 2; }
.title { margin-left: 8.500px; margin-top: -2px; font-size: 17.500px; font-weight: 600; color: #6b6b6e; }
.ficons { width: 824px; height: 65px; margin-left: auto; fill: none; stroke: #515154; stroke-width: 1.700; }
.ficons text { fill: #48484b; stroke: none; font-size: 16px; }
.fhead { height: 34px; border-bottom: 2px solid #2b2a2d; display: flex; align-items: center; padding: 0 0 3px 57px; font-size: 13px; position: relative; }
.fhead b { color: #d8d8da; }
.fhead .up { width: 10px; height: 8px; fill: none; stroke: #98989a; stroke-width: 1.400; margin-left: 709px; }
.fhead span { display: flex; align-items: center; }
.fhead .c1, .fhead .c2, .fhead .c3 { border-left: 1px solid #333236; height: 25px; padding-left: 8.500px; }
.fhead .c1 { margin-left: 10px; width: 223px; }
.fhead .c2 { width: 119px; }
.rows { padding: 5.300px 12px 0 12px; height: 304px; }
.r { height: 24.650px; display: flex; align-items: center; border-radius: 4px; padding-left: 6px; }
.r:nth-child(even) { background: #262528; }
.r.v2 { padding-left: 24.500px; }
.r.v3 { padding-left: 43px; }
.r.sel { background: #414043; }
.r .ch { width: 10px; height: 10px; color: #8c8c8e; margin-right: 3px; }
.fo { width: 19px; height: 17px; }
.fi { width: 19px; height: 19px; }
.r .n { margin-left: 7px; color: #e0e0e2; flex: 1; }
.r .d { width: 215px; flex: none; }
.r .s { width: 97px; text-align: right; flex: none; }
.r .k { width: 140px; margin-left: 16px; margin-right: 1px; flex: none; }
.r .d, .r .s, .r .k { color: #a5a5a7; }
.r.sel .d, .r.sel .s, .r.sel .k { color: #c8c8ca; }
.path { height: 36px; border-top: 2px solid #28272a; display: flex; align-items: center; font-size: 13px; padding-left: 16px; color: #a2a2a4; padding-bottom: 0; }
.path svg { width: 16px; height: 14px; margin-right: 6px; }
.path svg:first-child { width: 14px; height: 16px; }
.path svg.pf { width: 13px; height: 17px; margin-right: 7px; }
.path em { width: 19.800px; padding-left: 6px; }
.fstat { background: #131315; flex: 1; display: flex; align-items: center; justify-content: center; font-size: 13.500px; color: #464649; }

/* WaveLab */
.lab-win { left: 1129px; top: 645px; width: 1601px; height: 1043px; background: #2e2d30; font-size: 13px; font-weight: 500; color: #d6d6d8; }
.wl-title { height: 38px; background: #1e1e20; border-bottom: 4px solid #111113; display: flex; align-items: center; padding-left: 9px; }
.wl-title .t { margin-left: 165px; font: 500 16.500px Inter, sans-serif; color: #aeaeb0; }
.wl-body { display: flex; height: 1004px; }
.rail { width: 35px; display: flex; flex-direction: column; align-items: center; padding: 5px 0 0 4px; }
.rail span { writing-mode: vertical-rl; transform: rotate(180deg); height: 62px; font-size: 12px; line-height: 16px; color: #a8a8aa; }
.cells { display: grid; grid-template-columns: repeat(3, 5px); gap: 4px 2.500px; margin-top: 3px; }
.cells i { height: 9px; background: #d5d5d7; }
.wl-main { width: 1562px; background: #454346; border-left: 2px solid #5a595c; height: 1001px; padding: 0 8px 0 5px; }
.wl-head { height: 34px; display: flex; align-items: center; padding: 0 0 3px 0; color: #5fa6d2; margin-left: -2px; }
.wv { width: 20px; height: 18px; color: #c9d8e2; }
.wl-head > span { margin-left: 4px; font-weight: 600; }
.htools { width: 396px; height: 33px; margin-left: auto; margin-right: -8px; fill: none; stroke: #c9c9cb; stroke-width: 1.800; }
.ribbon { border: 2px solid #161618; border-top-width: 3px; height: 161px; }
.tabs { display: flex; height: 29px; background: #2b2a2d; align-items: stretch; color: #d6d6d8; font-weight: 700; font-size: 12.500px; }
.tabs a { display: flex; align-items: center; border-right: 1px solid #1d1d1f; gap: 6px; padding-left: 9px; width: 73px; }
.tabs a svg { width: 18px; height: 18px; }
.tabs a:nth-child(2) { width: 81px; } .tabs a:nth-child(3) { width: 79px; } .tabs a:nth-child(4) { width: 95px; }
.tabs a:nth-child(5) { width: 104px; } .tabs a:nth-child(6) { width: 84px; } .tabs a:nth-child(7) { width: 112px; }
.tabs a.act { width: 99px; background: #545356; gap: 7px; padding-left: 11px; }
.tabs a.act svg { width: 16px; height: 16px; }
.collapse { width: 11px; height: 8px; margin: 10px 7px 0 auto; }
.rbody { display: flex; height: 127px; background: linear-gradient(#555457, #4c4b4e 50%, #484749); }
.grp { display: flex; flex-direction: column; border-right: 2px solid #414043; }
.grp .in { height: 108px; }
.grp footer { flex: 1; background: #565558; display: flex; align-items: center; justify-content: center; font-size: 12px; color: #c2c2c4; padding-bottom: 1px; }
.g-src { width: 206px; } .g-res { width: 129px; } .g-out { width: 738px; } .g-opt { width: 70px; } .g-ren { width: 64px; }
.dd { margin: 35px 0 0 5px; width: 195px; height: 29px; background: #353437; border: 2px solid #1c1c1e; display: flex; align-items: center; padding: 0 5px 0 28px; justify-content: space-between; }
.tri { width: 9px; height: 8px; color: #e6e6e6; }
.g-res .in { padding: 5px 0 0 13px; }
.g-res label { display: flex; align-items: center; height: 29.500px; gap: 8px; }
.g-res i { width: 17px; height: 17px; border-radius: 50%; border: 1.500px solid #424144; }
.g-res i.on { background: #1d3a4d; border: 5.500px solid #cfeaf8; }
.g-out .in { padding-top: 6px; display: flex; flex-direction: column; gap: 2px; }
.f { display: flex; align-items: center; height: 28px; }
.fl { width: 60px; text-align: right; padding-right: 1px; margin-right: 4px; }
.box { width: 661px; height: 27px; background: #353437; border: 2px solid #191a1c; display: flex; align-items: center; padding-left: 5px; justify-content: space-between; }
.fx { width: 60px; height: 24px; }
.g-opt .in, .g-ren .in { display: flex; flex-direction: column; align-items: center; }
.g-opt svg { width: 40px; height: 30px; margin-top: 12px; }
.g-ren svg { width: 32px; height: 30px; margin-top: 13px; color: #6cb9e6; }
.g-opt .in span, .g-ren .in span { margin-top: 20px; line-height: 18px; }
.g-opt small { font-size: 9px; line-height: 9px; }
.logo { width: 60px; height: 50px; margin: 41px 11px 0 auto; }
.ftabs { height: 42px; border-top: 5px solid #5f5e61; margin-top: 1px; padding: 0 0 2px 4px; display: flex; align-items: center; gap: 5px; }
.ftabs a { display: flex; align-items: center; width: 287px; height: 27px; background: #353437; padding-left: 10px; color: #a9a9ab; }
.ftabs a span { margin-left: 11px; }
.ftabs a.act { width: 283px; background: #626164; color: #fff; font-weight: 600; padding-left: 8px; border-radius: 2px; }
.ftabs a.act .wv { color: #7fc0e6; }
.menu { width: 13px; height: 11px; margin: 0 7px 10px auto; }
.editor { margin: 0 8px 0 8px; width: 1531px; height: 711px; background: #242326; }
.pane { width: 1531px; }
#overview { height: 118px; }
#detail { height: 531px; }
.vt { height: 17px; display: flex; align-items: center; background: #2a292c; font-size: 13px; }
.vt a { line-height: 16px; height: 17px; margin-left: 8px; }
.vt a.act { background: #3f3e41; color: #5fb0de; width: 73px; padding-left: 5px; margin-left: 1px; }
.vt .mini { width: 38px; height: 15px; margin-left: 13px; }
.vt em { margin: 0 5px 0 11px; line-height: 10px; color: #8a8a8c; }
.vt .sb { flex: 1; height: 15px; background: #3a393c; }
.sb i { display: block; width: 46px; height: 15px; background: #5a595c; }
.wheel { width: 76px; height: 15px; margin-right: 16px; background: repeating-linear-gradient(90deg, rgba(0,0,0,.35) 0 1px, transparent 1px 5px), linear-gradient(90deg, #161618, #4a494c 60%, #1c1c1e); }
.stat { height: 28px; display: flex; align-items: center; justify-content: flex-end; color: #c5c5c7; padding: 2px 3px 0 0; }
.cells2 { display: flex; height: 25px; background: #4e4d50; margin-left: 9px; width: 543px; }
.cells2 div { display: flex; align-items: center; justify-content: space-between; border-right: 1px solid #323134; }
.cells2 svg { width: 22px; height: 24px; }
.s1 { width: 109px; padding: 0 8px 0 4px; } .s2 { width: 104px; padding: 0 5px 0 1px; } .s3 { width: 62px; padding: 0 6px 0 5px; } .s4 { width: 92px; padding: 0 7px 0 5px; } .s5 { width: 176px; padding: 0 5px; }
.star { width: 20px; height: 25px; margin-left: 9px; background: #4e4d50; font: 14px/25px "DejaVu Sans", sans-serif; text-align: center; color: #eee; }
.transport { display: flex; align-items: center; height: 45px; margin: 6px -7px 0 -4px; border-top: 2px solid #232225; padding: 2px 0 0 118px; }
.preset { width: 262px; height: 30px; border-radius: 3px; background: #0b0d10; display: flex; align-items: center; justify-content: space-between; padding: 0 9px 0 5px; }
.tb { display: flex; gap: 1.500px; height: 29px; background: #777; }
.tb b { width: 29px; background: linear-gradient(#d2d4d9, #b9bbc1); }
.tb svg { width: 29px; height: 29px; fill: none; stroke: #111; stroke-width: 2.500; }
.tb .k { fill: #0c0c0e; stroke: none; }
.tb.a { margin-left: 14px; } .tb.b { margin-left: 14px; }
.more { width: 45px; text-align: center; padding-left: 8px; font-size: 20px; line-height: 20px; color: #eee; }
.tb.c b:nth-child(n+3) { width: 45.500px; } .tb.c b:nth-child(n+3) svg { width: 45.500px; }
.tb.c b.loop { background: #3f96c4; }
.time { width: 262px; height: 30px; margin-left: 14px; background: #0b0d10; border-radius: 3px; display: flex; align-items: center; justify-content: center; font-size: 21px; font-weight: 600; color: #e8e8ea; }
.time2 { width: 175px; height: 30px; margin-left: 13px; background: #0b0d10; border-radius: 3px; }

/* caption */
.caption { position: absolute; left: 263px; top: 1458px; width: 2046px; height: 115px; background: #fdfefe; border-radius: 8px; color: #262626; display: flex; align-items: baseline; padding-left: 26px; font-size: 84px; line-height: 113px; font-weight: 500; }
.caption .pop { font-size: 93px; line-height: 100px; }
.ruler { font: 500 13px "Noto Sans", sans-serif; fill: #b0b0b2; }
.db { font: 500 11px "Noto Sans", sans-serif; fill: #a6a6a8; text-anchor: end; }
```
FILE: app.js
```js
// Space each label's letters so that it fills its design width.
function fitLabels() {
  document.querySelectorAll('[data-w]').forEach(function (el) {
    el.style.display = 'inline-block';
    el.style.letterSpacing = '0px';
    var natural = el.getBoundingClientRect().width;
    var n = el.textContent.length;
    el.style.letterSpacing = ((+el.dataset.w - natural) / n).toFixed(3) + 'px';
  });
}

function tag(name, attrs, text) {
  var s = '<' + name;
  for (var k in attrs) s += ' ' + k + '="' + attrs[k] + '"';
  return s + '>' + (text || '') + '</' + name + '>';
}
function rect(x, y, w, h, fill) { return tag('rect', { x: x, y: y, width: w, height: h, fill: fill }); }
function path(d, stroke, w, extra) {
  var a = { d: d, stroke: stroke, 'stroke-width': w, fill: 'none' };
  for (var k in extra || {}) a[k] = extra[k];
  return tag('path', a);
}

var MARKS = ['0', '300 ms', '600 ms', '900 ms', '1 s 200 ms', '1 s 500 ms', '1 s 800 ms', '2 s 100 ms', '2 s 400 ms'];

function ruler(x0, pitch, y0, y1, end) {
  var out = '', d = '', minor = '';
  MARKS.forEach(function (m, i) {
    var x = x0 + i * pitch;
    d += 'M' + x + ' ' + (y0 + 2) + 'V' + y1;
    out += tag('text', { x: x + 4, y: y0 + 13, 'class': 'ruler', textLength: m.length === 1 ? 7 : m.length > 6 ? 60 : 41 }, m);
    for (var k = 1; k < 10; k++) {
      var mx = x + k * pitch / 10;
      if (mx < end) minor += 'M' + mx + ' ' + (y1 - (k === 5 ? 7 : 3)) + 'V' + y1;
    }
  });
  return path(d, '#7b7b7d', 1.3) + path(minor, '#77777a', 1.2) + out;
}

function dbLabels(list) {
  return list.map(function (p) {
    return tag('text', { x: 1215, y: p[0] + 4, 'class': 'db' }, p[1]) + path('M1217 ' + p[0] + 'h4', '#8a8a8c', 1.2);
  }).join('');
}

function marker(x, y) { return '<path d="M' + x + ' ' + y + 'v14l4-2 4-5-4-5z" fill="#1fae2c"/>'; }

// Envelope of the lower half in the detail view.
var LOW = [[1222, 44], [1380, 46], [1470, 54], [1560, 47], [1673, 56], [1860, 65], [1950, 54], [2120, 35], [2240, 50], [2360, 61], [2480, 55], [2580, 47], [2610, 40], [2694, 50]];
function low(x) {
  for (var i = 1; i < LOW.length; i++) if (x <= LOW[i][0]) {
    var a = LOW[i - 1], b = LOW[i];
    return a[1] + (b[1] - a[1]) * (x - a[0]) / (b[0] - a[0]);
  }
  return 48;
}

// One tall narrow spike up and one down per cycle, with a smaller partial between them.
function zig(x0, x1, c, period, up) {
  var d = 'M' + x0 + ' ' + c;
  for (var x = x0, i = 0; x < x1 - 2; x += period, i++) {
    var u = up(x, i), v = low(x) - (i % 2) * 3;
    [[.1, -u], [.22, v * .5], [.32, -u * .78], [.5, v], [.62, -u * .2], [.74, v * .86], [.9, -u * .3]].forEach(function (p) {
      var px = x + p[0] * period;
      if (px < x1) d += 'L' + px.toFixed(1) + ' ' + (c + p[1]).toFixed(1);
    });
  }
  return d;
}

function drawOverview() {
  var s = rect(1179, 922, 1531, 118, '#242326') + rect(1222.5, 937, 1430.5, 21, '#49484b') + rect(1222, 958, 439, 82, '#262528');
  s += ruler(1222.5, 165.8, 936, 958, 2653) + rect(1661, 958, 1033, 82, '#c3dae0');
  s += path('M1218 978.5H1661M1218 1018.500H1661', '#58585a', 1.5) + path('M1661 978.5H2690M1661 1018.500H2690', '#97adb5', 1.5);
  function z(a, b) {
    var d = 'M' + a + ' 999';
    for (var x = a, i = 0; x < b - 3; x += (x > 2600 ? 5.5 : 8.6), i++) {
      d += 'L' + (x + 1.6) + ' ' + (991 - i % 3) + 'L' + (x + 4) + ' ' + (1004 + i % 2) + 'L' + (x + 5.2) + ' 996L' + (x + 6.8) + ' ' + (1007 + i * 7 % 4);
    }
    return d;
  }
  s += rect(1223, 994, 438, 10, 'rgba(49,120,160,.45)');
  s += path(z(1223, 1661), '#3f8db8', 1.8) + path(z(1661, 2694), '#28506c', 1.8);
  s += marker(1661, 922) + path('M1661 936V958', '#888', 1);
  s += dbLabels([[963, 'dB 0'], [979, '-6'], [999, 'dB 0'], [1018, '-6'], [1034, 'dB 0']]);
  s += rect(2694, 922, 16, 118, '#2b2a2d') + rect(2697, 925, 11, 9, '#48474a') + rect(2697, 938, 11, 9, '#48474a');
  for (var k = 0; k < 12; k++) s += rect(2697, 962 + k * 6, 11, 4, k > 3 && k < 8 ? '#4c4b4e' : '#353437');
  document.getElementById('overview').innerHTML = s;
}

function drawDetail() {
  var s = rect(1179, 1057, 1531, 531, '#242326') + rect(1222, 1098, 451, 490, '#262528') + rect(1673, 1077, 1021, 21, '#49484b');
  s += ruler(1222.5, 170.6, 1077, 1098, 2694) + rect(1673, 1098, 1021, 490, '#c3dae0');
  s += path('M1222 1223.500H1673M1222 1461.500H1673', '#4c4c4e', 1.5) + path('M1673 1223.500H2690M1673 1461.500H2690', '#97adb5', 1.7);
  var up = function (x, i) { return (x < 1240 ? 40 : x > 2620 ? 44 : 48) - (i * 5 % 4); };
  function part(a, b, color, fill, op, period) {
    var pts = [], bot = [];
    for (var x = a; x <= b; x += 6) { pts.push(x + ' ' + (1342 - 8 - 5 * Math.sin(x / 47))); bot.unshift(x + ' ' + (1342 + low(x) * .6)); }
    return '<path d="M' + pts.join('L') + 'L' + bot.join('L') + 'Z" fill="' + fill + '" opacity="' + op + '"/>' +
      path(zig(a, b, 1342, period, up), color, 1.15, { 'stroke-linejoin': 'bevel' });
  }
  s += part(1223, 1673, '#3a84ac', '#2f86b4', .6, 8.6) + part(1673, 2600, '#2f556f', '#23506d', .1, 8.6) + part(2600, 2694, '#4a6f87', '#23506d', .25, 6.9);
  s += path('M1222 1342H2694', '#5d7c8e', 1.3);
  s += marker(1673, 1062) + '<path d="M1763 1098l6 0 1 5-4 5-4-5z" fill="#3fb54a"/>';
  s += dbLabels([[1104.6, 'dB 0'], [1130, '-1'], [1153.6, '-2'], [1174.6, '-3'], [1193, '-4'], [1223.6, '-6'], [1249, '-8'], [1268.5, '-10'], [1296, '-14'], [1320, '-20'], [1343, 'dB 0'], [1367, '-20'], [1392, '-14'], [1418, '-10'], [1438, '-8'], [1582, 'dB 0']]);
  s += rect(2694, 1057, 16, 531, '#38373a') + rect(2697, 1065, 11, 9, '#48474a') + rect(2697, 1182, 12, 197, '#5a595c') + rect(2697, 1481, 12, 107, '#1f1e21');
  for (var k = 0; k < 9; k++) s += rect(2698, 1518 + k * 6, 10, 4, k > 2 && k < 7 ? '#4c4b4e' : '#353437');
  s += rect(1938, 1059, 12, 2, '#666');
  document.getElementById('detail').innerHTML = s;
}

fitLabels();
drawOverview();
drawDetail();
```
